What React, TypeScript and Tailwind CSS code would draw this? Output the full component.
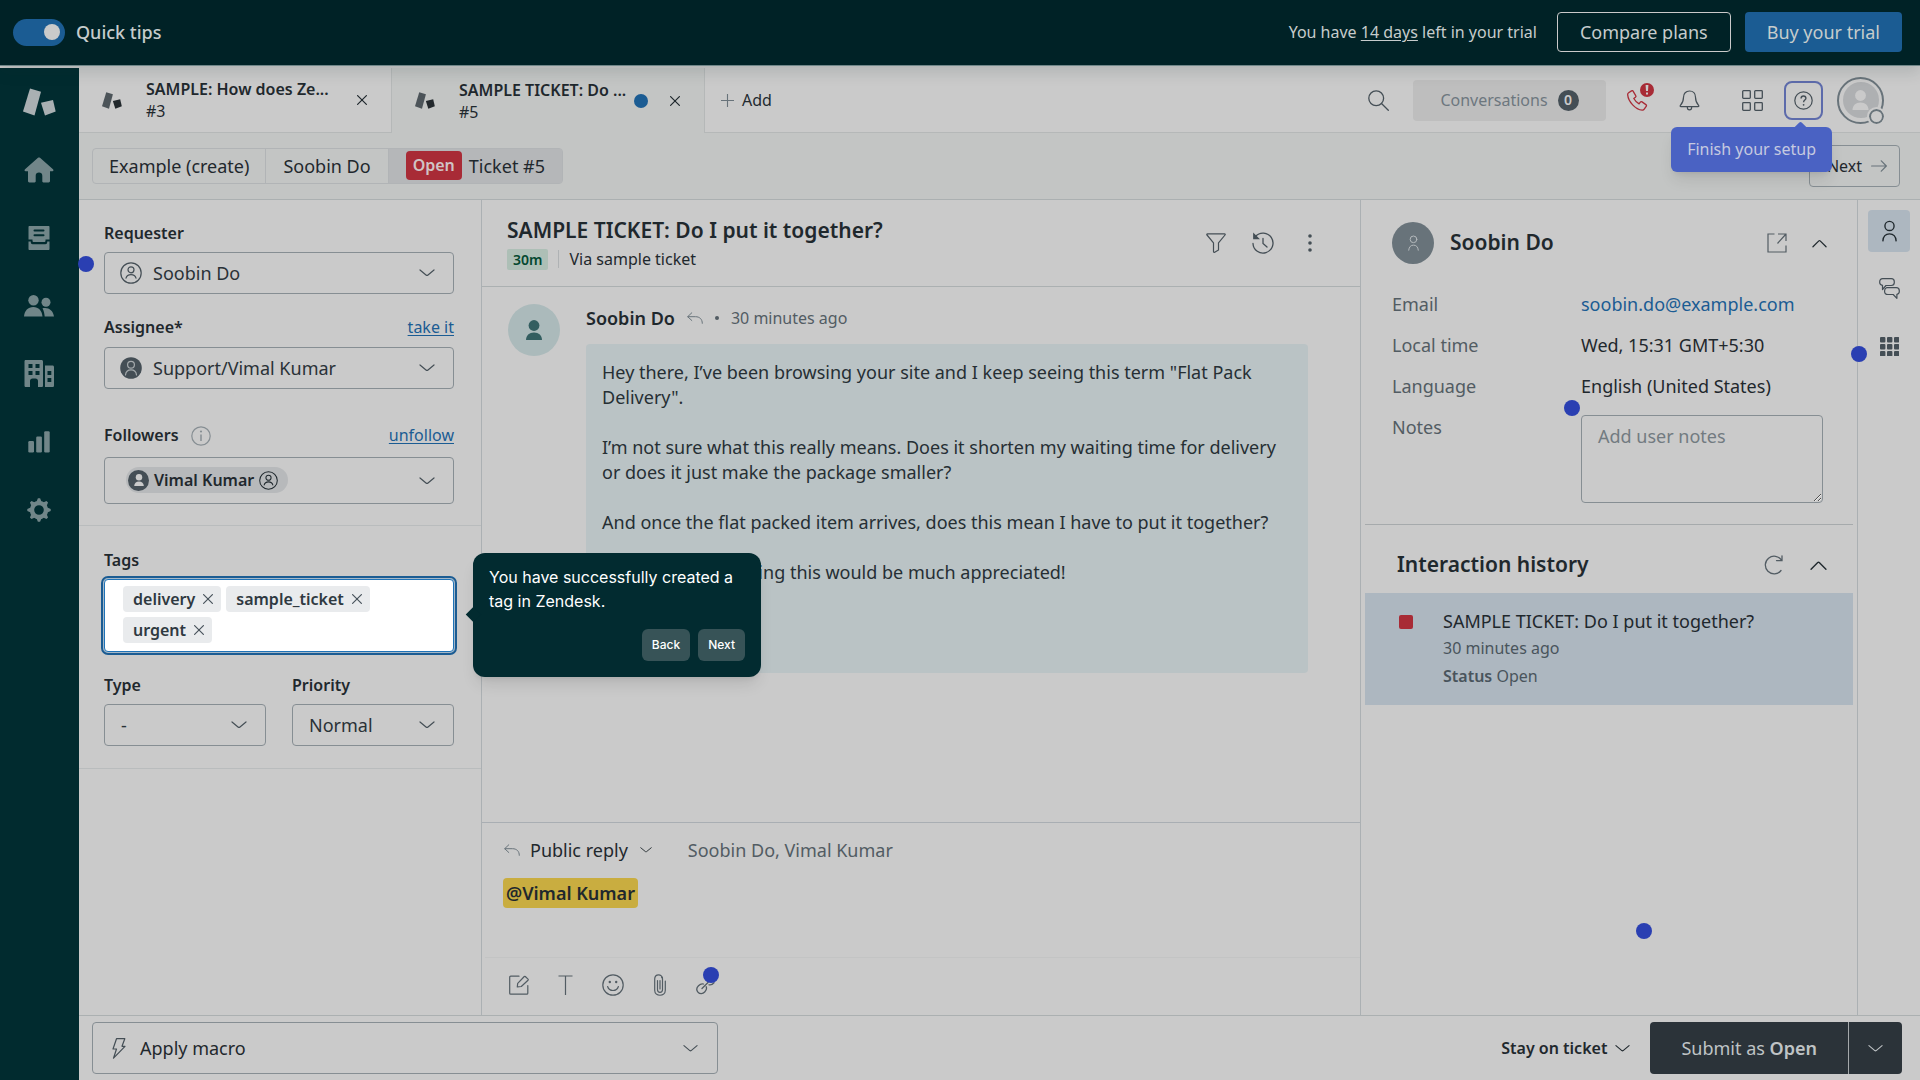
import type { ReactNode } from "react";

type IconProps = { className?: string };

const ChevronDown = ({ className = "w-4 h-4" }: IconProps) => (
  <svg viewBox="0 0 16 16" fill="none" stroke="currentColor" strokeWidth="1.2" strokeLinecap="round" className={className}>
    <path d="M1 5l6.3 5.2c.4.3 1 .3 1.4 0L15 5" />
  </svg>
);

const ChevronUp = ({ className = "w-4 h-4" }: IconProps) => (
  <svg viewBox="0 0 16 16" fill="none" stroke="currentColor" strokeWidth="1.3" strokeLinecap="round" className={className}>
    <path d="M1 11.500l6.300-6.300c.4-.4 1-.4 1.400 0L15 11.500" />
  </svg>
);

const Close = ({ className = "w-[10px] h-[10px]" }: IconProps) => (
  <svg viewBox="0 0 10 10" fill="none" stroke="currentColor" strokeWidth="1.2" strokeLinecap="round" className={className}>
    <path d="M.6.6l8.800 8.800M9.400.6L.6 9.400" />
  </svg>
);

const UserCircle = ({ className = "w-[22px] h-[22px]" }: IconProps) => (
  <svg viewBox="0 0 22 22" fill="none" stroke="currentColor" strokeWidth="1.2" strokeLinecap="round" className={className}>
    <circle cx="11" cy="11" r="10.200" />
    <circle cx="11" cy="7.800" r="3" />
    <path d="M6 16.200c.6-2.500 2.500-3.600 5-3.600s4.400 1.100 5 3.600" />
  </svg>
);

const UserCircleFill = ({ className = "w-[22px] h-[22px]" }: IconProps) => (
  <svg viewBox="0 0 22 22" fill="none" strokeLinecap="round" className={className}>
    <circle cx="11" cy="11" r="10.800" fill="#444e55" />
    <circle cx="11" cy="7.800" r="3.400" stroke="#a5aaad" strokeWidth="1.200" />
    <path d="M5.500 18c.3-3.500 2.500-5.200 5.500-5.200s5.200 1.700 5.500 5.200" stroke="#a5aaad" strokeWidth="1.200" />
  </svg>
);

const User = ({ className }: IconProps) => (
  <svg viewBox="0 0 16 24" fill="none" stroke="currentColor" strokeWidth="1.500" strokeLinecap="round" className={className}>
    <circle cx="8" cy="6.500" r="5" />
    <path d="M.8 22.800c.4-5 3.200-7.600 7.200-7.600s6.800 2.600 7.200 7.600" />
  </svg>
);

const UserSolid = ({ className }: IconProps) => (
  <svg viewBox="0 0 16 20" fill="currentColor" className={className}>
    <circle cx="8" cy="5.500" r="5.400" />
    <path d="M0 20c0-4.600 3.200-7.600 8-7.600s8 3 8 7.600z" />
  </svg>
);

const Reply = ({ className = "w-4 h-4" }: IconProps) => (
  <svg viewBox="0 0 16 12" fill="none" stroke="currentColor" strokeWidth="1" strokeLinecap="round" strokeLinejoin="round" className={className}>
    <path d="M4.800.8L.7 4.700l4.100 3.800M.9 4.700h7.600c4 0 6.800 2.300 6.800 6.600" />
  </svg>
);

const Mark = ({ className, small = "currentColor" }: IconProps & { small?: string }) => (
  <svg viewBox="0 0 33 28" className={className}>
    <path fill="currentColor" d="M7 .4L18 3.700 11.500 27.500 0 23.500z" />
    <path fill={small} d="M18 14.800l12-2.900L32.700 23.500 22 27.500z" />
  </svg>
);

const navItems: { name: string; icon: ReactNode }[] = [
  {
    name: "Home",
    icon: (
      <svg viewBox="0 0 30 26" fill="currentColor" className="w-[30px] h-[26px]">
        <path d="M14 .8c.6-.5 1.400-.5 2 0L29 12.200c.9.9.5 2-.6 2H26V24c0 .9-.5 1.400-1.400 1.400h-5.200c-.7 0-1.100-.4-1.100-1.100v-5.500c0-2-1.300-3.200-3.300-3.200s-3.300 1.200-3.300 3.200v5.500c0 .7-.4 1.100-1.100 1.100H5.400C4.500 25.400 4 24.900 4 24v-9.800H1.600c-1.100 0-1.500-1.100-.6-2z" />
      </svg>
    ),
  },
  {
    name: "Views",
    icon: (
      <svg viewBox="0 0 22 24" fill="currentColor" className="w-[22px] h-[24px]">
        <path fillRule="evenodd" d="M1.500 0h19c.6 0 1 .4 1 1v12.500h-4v1.200c0 .8-.5 1.300-1.300 1.300H5.800c-.8 0-1.300-.5-1.300-1.300v-1.200h-4V1c0-.6.400-1 1-1zM6.500 3.500a1 1 0 000 2h9a1 1 0 000-2zM6.500 8.200a1 1 0 000 2h9a1 1 0 000-2z" />
        <path d="M.5 15.500h2.300v.8c0 1.200.7 1.900 1.900 1.900h12.600c1.200 0 1.900-.7 1.900-1.900v-.8h2.300V23c0 .6-.4 1-1 1h-19c-.6 0-1-.4-1-1z" />
      </svg>
    ),
  },
  {
    name: "Customers",
    icon: (
      <svg viewBox="0 0 30 22" fill="currentColor" className="w-[30px] h-[22px]">
        <circle cx="9.500" cy="5.300" r="5.200" />
        <circle cx="22" cy="7.200" r="4.500" />
        <path d="M0 21.500C.5 15.800 4 12 9.300 12s8.700 3.800 9.200 9.500zM18.500 13.300c5.500-1.300 10.500 1.500 11.500 8.200h-9.300c-.3-3.200-1-6-2.200-8.200z" />
      </svg>
    ),
  },
  {
    name: "Organizations",
    icon: (
      <svg viewBox="0 0 30 28" fill="currentColor" className="w-[30px] h-[28px]">
        <path fillRule="evenodd" d="M1.500 0h16c.9 0 1.500.6 1.500 1.500v24c0 1-.5 1.500-1.300 1.500H14v-6c0-1.500-1-2.500-2.500-2.500h-3C7 18.500 6 19.500 6 21v6H2.300C.5 27 .5 26.500.5 25V1.500C.5.6.8 0 1.500 0zM4.500 4v4h4V4zm7 0v4h4V4zm-7 7v4h4v-4zm7 0v4h4v-4z" />
        <path fillRule="evenodd" d="M21 5.500h7.500c.9 0 1.500.6 1.500 1.500v18.500c0 1-.6 1.500-1.500 1.500H21zM23.500 11v4h3.800v-4zm0 7v4h3.800v-4z" />
      </svg>
    ),
  },
  {
    name: "Reporting",
    icon: (
      <svg viewBox="0 0 22 22" fill="currentColor" className="w-[22px] h-[22px]">
        <rect x=".3" y="10" width="5.700" height="11.500" rx="1.200" />
        <rect x="8.200" y="5.500" width="5.700" height="16" rx="1.200" />
        <rect x="16.200" y=".3" width="5.500" height="21.200" rx="1.200" />
      </svg>
    ),
  },
  {
    name: "Admin",
    icon: (
      <svg viewBox="0 0 24 24" className="w-6 h-6">
        <circle cx="12" cy="12" r="7" fill="none" stroke="currentColor" strokeWidth="4.400" />
        <g fill="currentColor">
          {[0, 45, 90, 135, 180, 225, 270, 315].map((a) => (
            <path key={a} d="M10.900.3h2.200l1.600 4H9.300z" transform={`rotate(${a} 12 12)`} />
          ))}
        </g>
      </svg>
    ),
  },
];

const details = [
  { label: "Email", value: "soobin.do@example.com", link: true },
  { label: "Local time", value: "Wed, 15:31 GMT+5:30" },
  { label: "Language", value: "English (United States)" },
];

const Dot = ({ className }: IconProps) => (
  <span className={`absolute z-10 w-4 h-4 rounded-full bg-[#2a3fb2] ${className}`} />
);

const TopBar = () => (
  <div className="relative z-20 flex items-center shrink-0 h-[66px] pl-[13px] pr-[18px] pb-px bg-[#002226] border-b border-[#6f8688] text-[#c6cccc] shadow-[0_6px_14px_rgba(20,40,40,0.14)]">
    <label className="flex items-center gap-[11px] text-lg font-medium">
      <input type="checkbox" defaultChecked className="peer sr-only" />
      <span className="flex items-center justify-end w-[52px] h-[27px] pr-[5px] rounded-full bg-[#1b5c93]">
        <span className="w-4 h-4 rounded-full bg-[#cacaca]" />
      </span>
      Quick tips
    </label>
    <p className="ml-auto mr-5 text-base">
      You have <a href="#trial" className="underline underline-offset-2">14 days</a> left in your trial
    </p>
    <button className="h-10 px-[22px] mr-[14px] text-lg border border-[#cacaca] rounded">Compare plans</button>
    <button className="h-10 px-[22px] text-lg rounded bg-[#1b5c93]">Buy your trial</button>
  </div>
);

const Sidebar = () => (
  <nav className="flex flex-col shrink-0 w-[79px] pr-px bg-[#012b2f] text-[#718689]">
    <div className="flex items-center justify-center h-[68px] text-[#a9b0b3]">
      <Mark className="w-[33px] h-7" />
    </div>
    {navItems.map((item) => (
      <a key={item.name} href="#nav" aria-label={item.name} className="flex items-center justify-center h-[68px]">
        {item.icon}
      </a>
    ))}
  </nav>
);

const Tab = ({ title, id, active }: { title: string; id: string; active?: boolean }) => (
  <div
    className={`flex items-center w-[313px] h-[65px] pl-[23px] pr-6 border-r border-[#b5b8b8] ${
      active ? "bg-[#c3c5c4]" : "border-b"
    }`}
  >
    <Mark className="w-5 h-[17px] mr-6 text-[#4c5459]" small="#22282c" />
    <div className="text-base leading-[22px]">
      <p className="font-semibold">{title}</p>
      <p>{id}</p>
    </div>
    {active && <span className="w-[14px] h-[14px] ml-auto mr-[22px] rounded-full bg-[#1b5c93]" />}
    <button aria-label="Close tab" className={active ? "" : "ml-auto"}>
      <Close />
    </button>
  </div>
);

const Header = () => (
  <header className="flex shrink-0 h-[65px]">
    <Tab title="SAMPLE: How does Ze..." id="#3" />
    <Tab title="SAMPLE TICKET: Do ..." id="#5" active />
    <div className="flex items-center flex-1 pl-4 pr-9 border-b border-[#b5b8b8] text-[#444e55]">
      <button className="flex items-center gap-2 text-base text-[#232b30]">
        <svg viewBox="0 0 13 13" stroke="#68737a" strokeWidth="1.100" className="w-[13px] h-[13px]">
          <path d="M6.500 0v13M0 6.500h13" />
        </svg>
        Add
      </button>
      <button aria-label="Search" className="ml-auto mr-6">
        <svg viewBox="0 0 21 21" fill="none" stroke="currentColor" strokeWidth="1.300" strokeLinecap="round" className="w-[21px] h-[21px]">
          <circle cx="8.200" cy="8.200" r="7.400" />
          <path d="M13.500 13.500l6.800 6.800" />
        </svg>
      </button>
      <button className="flex items-center justify-center gap-[10px] w-[193px] h-[41px] rounded bg-[#bebebe] text-base text-[#6d777e]">
        Conversations
        <span className="flex items-center justify-center w-[21px] h-[21px] rounded-full bg-[#444e55] text-sm font-semibold text-[#cacaca]">0</span>
      </button>
      <button aria-label="Talk" className="relative ml-[21px]">
        <svg viewBox="0 0 21 21" fill="none" stroke="#a82b36" strokeWidth="1.300" strokeLinejoin="round" className="w-[21px] h-[21px]">
          <path d="M4.500.9L1.600 2.800C.8 3.300.6 4 .7 4.900c.6 6.800 7.800 14.600 14.500 15.300.9.1 1.500-.2 2-1l2-2.900c.4-.6.3-1.300-.3-1.700l-3.900-2.700c-.6-.4-1.200-.3-1.700.3l-1.200 1.600C9.800 12.600 8 10.700 6.800 8.500l1.600-1.200c.6-.5.7-1.100.3-1.700L6.200 1.300C5.800.6 5.100.5 4.500.9z" />
        </svg>
        <span className="absolute -top-[7px] left-[13px] flex items-center justify-center w-[14px] h-[14px] rounded-full bg-[#a82b36]">
          <svg viewBox="0 0 4 10" fill="#cacaca" className="w-1 h-[10px]">
            <path d="M.6 0h2.800l-.4 6H1zM1 7.500h2v2H1z" />
          </svg>
        </span>
      </button>
      <button aria-label="Notifications" className="ml-[31px]">
        <svg viewBox="0 0 21 21" fill="none" stroke="currentColor" strokeWidth="1.200" strokeLinejoin="round" className="w-[21px] h-[21px]">
          <path d="M10.500 1c-3.600 0-6 2.500-6 6.200 0 4.300-1.300 6.200-3.100 8.200-.5.600-.3 1.300.6 1.300h17c.9 0 1.100-.7.6-1.300-1.800-2-3.100-3.900-3.100-8.200 0-3.700-2.400-6.200-6-6.200z" />
          <path d="M8.300 16.900c0 2 .8 2.900 2.200 2.900s2.200-.9 2.200-2.900" />
        </svg>
      </button>
      <button aria-label="Products" className="ml-[42px] mr-[21px]">
        <svg viewBox="0 0 21 21" fill="none" stroke="currentColor" strokeWidth="1.300" className="w-[21px] h-[21px]">
          <rect x=".7" y=".7" width="7.600" height="7.600" rx=".8" />
          <rect x="12.700" y=".7" width="7.600" height="7.600" rx=".8" />
          <rect x=".7" y="12.700" width="7.600" height="7.600" rx=".8" />
          <rect x="12.700" y="12.700" width="7.600" height="7.600" rx=".8" />
        </svg>
      </button>
      <div className="relative">
        <button aria-label="Help" className="flex items-center justify-center w-[39px] h-[39px] border-2 border-[#5d6bab] rounded-lg">
          <svg viewBox="0 0 19 19" fill="none" stroke="currentColor" strokeWidth="1.200" className="w-[19px] h-[19px]">
            <circle cx="9.500" cy="9.500" r="8.700" />
            <path d="M7.100 7.500c0-1.600 1-2.500 2.400-2.500s2.400.9 2.400 2.200c0 1.900-2.300 1.900-2.300 4" strokeWidth="1.400" />
            <circle cx="9.600" cy="13.800" r=".9" fill="currentColor" stroke="none" />
          </svg>
        </button>
        <span className="absolute z-10 top-[43px] left-[10px] w-[13px] h-[13px] rotate-45 rounded-xs bg-[#4a62c3]" />
        <div className="absolute z-10 top-[46px] -right-[9px] px-4 py-[11px] rounded-md bg-[#4a62c3] text-base leading-[23px] whitespace-nowrap text-[#c6cae0] shadow-lg">
          Finish your setup
        </div>
      </div>
      <button aria-label="Profile" className="relative flex items-center justify-center w-[47px] h-[47px] ml-[14px] rounded-full border-2 border-[#68737a]">
        <span className="flex items-center justify-center w-9 h-9 rounded-full bg-[#aeb0b2] text-[#cacaca]">
          <UserSolid className="w-[17px] h-5" />
        </span>
        <span className="absolute -right-[2px] -bottom-[2px] w-[15px] h-[15px] rounded-full border-2 border-[#68737a] bg-[#cacaca] outline-2 outline-[#cacaca]" />
      </button>
    </div>
  </header>
);

const Breadcrumb = () => (
  <div className="flex items-center justify-between shrink-0 h-[67px] pl-[13px] pr-5 pb-px bg-[#c3c5c4] border-b border-[#abb0b1]">
    <div className="flex h-9 border border-[#b1b4b6] rounded divide-x divide-[#b1b4b6] text-lg">
      <button className="px-4">Example (create)</button>
      <button className="px-[17px]">Soobin Do</button>
      <button className="flex items-center gap-[7px] px-[17px] bg-[#b5b7b9]">
        <span className="px-[7px] py-[3px] rounded bg-[#a82b36] text-base leading-[23px] font-semibold text-[#d0c4c5]">Open</span>
        Ticket #5
      </button>
    </div>
    <button className="flex items-center gap-[9px] h-[42px] pl-[17px] pr-3 border border-[#868e93] rounded text-base">
      Next
      <svg viewBox="0 0 16 12" fill="none" stroke="#68737a" strokeWidth="1.200" strokeLinecap="round" className="w-4 h-3">
        <path d="M.6 6h14.500M10.300.8l5 5.200-5 5.200" />
      </svg>
    </button>
  </div>
);

const SelectField = ({ id, value, icon, tall }: { id: string; value: string; icon?: ReactNode; tall?: boolean }) => (
  <div className="relative flex items-center text-[#444e55]">
    {icon && <span className="absolute left-4">{icon}</span>}
    <select
      id={id}
      className={`w-full pr-10 border border-[#868e93] rounded appearance-none text-lg text-[#2a3237] ${
        tall ? "h-[47px]" : "h-[42px]"
      } ${icon ? "pl-12" : "pl-4"}`}
    >
      <option>{value}</option>
    </select>
    <ChevronDown className="absolute right-[19px] w-4 h-4" />
  </div>
);

const Tag = ({ name }: { name: string }) => (
  <span className="flex items-center gap-2 h-[26px] pl-[10px] pr-2 rounded-sm bg-[#e9ebed] text-base font-semibold text-[#2f3941]">
    {name}
    <button aria-label={`Remove ${name}`} className="text-[#49545c]">
      <Close />
    </button>
  </span>
);

const TipPopup = () => (
  <div className="absolute z-10 -top-[26px] left-[369px] w-[288px] p-4 pt-3 rounded-xl bg-[#022b30] text-white font-[Inter,sans-serif] shadow-lg">
    <span className="absolute top-[56px] -left-[5px] w-[11px] h-[11px] rotate-45 bg-[#022b30]" />
    <p className="text-base leading-6">You have successfully created a tag in Zendesk.</p>
    <div className="flex justify-end gap-2 mt-4 text-xs font-medium">
      <button className="h-8 px-[10px] rounded-md bg-[#375357]">Back</button>
      <button className="h-8 px-[10px] rounded-md bg-[#375357]">Next</button>
    </div>
  </div>
);

const TicketFields = () => (
  <section className="relative shrink-0 w-[403px] border-r border-[#abb0b3] text-base">
    <Dot className="top-14 -left-px" />
    <div className="pl-[25px] pr-[27px] pt-[22px] pb-[21px] border-b border-[#b9bcbd]">
      <label htmlFor="requester" className="block mb-[7px] leading-[23px] font-semibold">Requester</label>
      <SelectField id="requester" value="Soobin Do" icon={<UserCircle />} />
      <div className="flex justify-between mt-[22px] mb-[8px] leading-[23px]">
        <label htmlFor="assignee" className="font-semibold">Assignee*</label>
        <a href="#take" className="text-[#1b5c93] underline underline-offset-2">take it</a>
      </div>
      <SelectField id="assignee" value="Support/Vimal Kumar" icon={<UserCircleFill />} />
      <div className="flex items-center mt-[35px] mb-[10px] leading-[23px]">
        <label htmlFor="followers" className="font-semibold">Followers</label>
        <svg viewBox="0 0 20 20" fill="none" stroke="#868e93" strokeWidth="1.200" className="w-5 h-5 ml-3">
          <circle cx="10" cy="10" r="9.200" />
          <path d="M10 8.500v6.500" strokeWidth="1.500" />
          <circle cx="10" cy="5.500" r="1.100" fill="#868e93" stroke="none" />
        </svg>
        <a href="#unfollow" className="ml-auto text-[#1b5c93] underline underline-offset-2">unfollow</a>
      </div>
      <div className="relative">
        <SelectField id="followers" value="" tall />
        <span className="absolute top-[10px] left-[22px] flex items-center gap-[5px] h-[26px] pl-[2px] pr-[10px] rounded-full bg-[#b7b9bb] font-semibold">
          <span className="flex items-center justify-center w-[21px] h-[21px] rounded-full bg-[#444e55] text-[#cacaca]">
            <UserSolid className="w-[10px] h-3" />
          </span>
          Vimal Kumar
          <UserCircle className="w-[19px] h-[19px]" />
        </span>
      </div>
    </div>
    <div className="pl-[25px] pr-[27px] pt-[23px] pb-[22px] border-b border-[#b9bcbd]">
      <label htmlFor="tags" className="block mb-[7px] leading-[23px] font-semibold">Tags</label>
      <div className="relative">
        <div className="flex flex-wrap content-start gap-[5px] min-h-[73px] px-[18px] py-[6px] bg-white border border-[#1f73b7] rounded ring-1 ring-[#a4b7c8] outline-2 outline-offset-1 outline-[#1b5c93]">
          <Tag name="delivery" />
          <Tag name="sample_ticket" />
          <Tag name="urgent" />
          <input id="tags" type="text" className="flex-1 min-w-10 outline-none" />
        </div>
        <TipPopup />
      </div>
      <div className="grid grid-cols-2 gap-[26px] mt-[22px]">
        <div>
          <label htmlFor="type" className="block mb-[7px] leading-[23px] font-semibold">Type</label>
          <SelectField id="type" value="-" />
        </div>
        <div>
          <label htmlFor="priority" className="block mb-[7px] leading-[23px] font-semibold">Priority</label>
          <SelectField id="priority" value="Normal" />
        </div>
      </div>
    </div>
  </section>
);

const Conversation = () => (
  <main className="flex flex-col flex-1 min-w-0">
    <div className="flex items-center h-[87px] pl-[25px] pr-10 border-b border-[#abb0b1]">
      <div>
        <h1 className="text-[21px] leading-7 font-semibold">SAMPLE TICKET: Do I put it together?</h1>
        <div className="flex items-center mt-1 text-base leading-[22px]">
          <span className="px-[6px] rounded-xs bg-[#adbfb6] text-sm leading-[21px] font-semibold text-[#03482f]">30m</span>
          <span className="w-px h-[18px] mx-[10px] bg-[#afb2b4]" />
          Via sample ticket
        </div>
      </div>
      <div className="flex items-center gap-[26px] ml-auto text-[#444e55]">
        <button aria-label="Filter">
          <svg viewBox="0 0 20 20" fill="none" stroke="currentColor" strokeWidth="1.200" strokeLinejoin="round" className="w-5 h-5">
            <path d="M1.500.8h17c.7 0 .9.700.5 1.200L12.500 9.800v7.200l-3.800 2.200c-.6.300-1.200 0-1.200-.7V9.800L1 2C.6 1.500.8.8 1.500.8z" />
          </svg>
        </button>
        <button aria-label="Events">
          <svg viewBox="0 0 22 22" fill="none" stroke="currentColor" strokeWidth="1.300" strokeLinecap="round" className="w-[22px] h-[22px]">
            <path d="M3.500 4.500A10 10 0 111 11.500M11 6.500v5l4 3.500" />
            <path d="M1.800 2v4.600h4.600z" fill="currentColor" />
          </svg>
        </button>
        <button aria-label="More" className="px-2">
          <svg viewBox="0 0 4 18" fill="currentColor" className="w-1 h-[18px]">
            <circle cx="2" cy="2" r="1.800" />
            <circle cx="2" cy="9" r="1.800" />
            <circle cx="2" cy="16" r="1.800" />
          </svg>
        </button>
      </div>
    </div>

    <div className="flex items-start flex-1 pt-[17px] pl-[26px] pr-[52px]">
      <div className="flex items-center justify-center shrink-0 w-[52px] h-[52px] mr-[26px] rounded-full bg-[#abbabb] text-[#335e60]">
        <UserSolid className="w-4 h-5" />
      </div>
      <div className="flex-1">
        <div className="flex items-center gap-3 h-7 mb-3 text-base text-[#525c63]">
          <h2 className="text-lg font-semibold text-[#1f282d]">Soobin Do</h2>
          <Reply className="w-4 h-3 text-[#68737a]" />
          <span className="w-1 h-1 rounded-full bg-[#525c63]" />
          30 minutes ago
        </div>
        <div className="flex flex-col gap-[25px] px-4 pt-4 pb-[13px] rounded-sm bg-[#bac3c5] text-lg leading-[25px] text-[#262f34]">
          <p>Hey there, I’ve been browsing your site and I keep seeing this term "Flat Pack Delivery".</p>
          <p>I’m not sure what this really means. Does it shorten my waiting time for delivery or does it just make the package smaller?</p>
          <p>And once the flat packed item arrives, does this mean I have to put it together?</p>
          <p>Your help in clarifying this would be much appreciated!</p>
          <p>
            Thanks,
            <br />
            Soobin
          </p>
        </div>
      </div>
    </div>

    <div className="h-[193px] border-t border-[#a9aeb3]">
      <div className="flex items-center h-[54px] pl-[22px] text-lg">
        <button className="flex items-center gap-[10px]">
          <Reply className="w-4 h-3 text-[#68737a]" />
          Public reply
          <ChevronDown className="w-3 h-3 ml-[2px]" />
        </button>
        <span className="ml-9 text-[#525c63]">Soobin Do, Vimal Kumar</span>
      </div>
      <div className="h-[81px] ml-[3px] pl-[18px] pt-[1px] border-b border-[#c3c4c4] text-lg">
        <span className="inline-block px-[3px] rounded bg-[#c9ad40] leading-[30px] font-semibold">@Vimal Kumar</span>
      </div>
      <div className="flex items-center h-[54px] pl-[27px] text-[#525c63]">
        <button aria-label="Draft" className="w-[47px]">
          <svg viewBox="0 0 20 20" fill="none" stroke="currentColor" strokeWidth="1.200" strokeLinecap="round" strokeLinejoin="round" className="w-5 h-5">
            <path d="M10 1.200H1.700c-.6 0-1 .4-1 1v16c0 .6.400 1 1 1h16.100c.6 0 1-.4 1-1v-7.700" />
            <path d="M8.700 8.300L15.300 1.500c.3-.3.700-.3 1 0l2.700 2.700c.3.300.3.700 0 1L12.300 11.500l-4 .4z" />
          </svg>
        </button>
        <button aria-label="Text style" className="w-[46px] pl-[2px]">
          <svg viewBox="0 0 15 20" fill="none" stroke="currentColor" strokeWidth="1.200" className="w-[15px] h-5">
            <path d="M.5 1h14M7.500 1v19" />
          </svg>
        </button>
        <button aria-label="Emoji" className="w-[47px]">
          <svg viewBox="0 0 22 22" fill="none" stroke="currentColor" strokeWidth="1.200" strokeLinecap="round" className="w-[22px] h-[22px]">
            <circle cx="11" cy="11" r="10.200" />
            <path d="M5.600 12.500c.8 2.500 2.800 4 5.400 4s4.600-1.500 5.400-4" />
            <circle cx="7.800" cy="8" r="1.200" fill="currentColor" stroke="none" />
            <circle cx="14.200" cy="8" r="1.200" fill="currentColor" stroke="none" />
          </svg>
        </button>
        <button aria-label="Attach" className="w-[46px] pl-[5px]">
          <svg viewBox="0 0 12 22" fill="none" stroke="currentColor" strokeWidth="1.200" strokeLinecap="round" className="w-3 h-[22px]">
            <path d="M3.500 6.500v9.300c0 3.300 5 3.300 5 0V4.800c0-1.200-.2-1.600-.9-1.600M6 6.500V15" />
            <path d="M11.300 7v9.300c0 6.600-10.600 6.600-10.600 0V5c0-5.600 7.800-5.600 7.800 0" />
          </svg>
        </button>
        <button aria-label="Link" className="relative pl-[1px]">
          <svg viewBox="0 0 20 20" fill="none" stroke="currentColor" strokeWidth="1.300" strokeLinecap="round" className="w-5 h-5">
            <path d="M7.500 9c-2.200-.7-3.300 0-5 1.700-2 2-2.200 4.500-.5 6.500 2 2 4.700 1.800 6.700-.2 1.700-1.700 2.400-3.200 1.500-5.200M6 13.500l6-6" />
            <path d="M13 9.800c2.500.7 3.700-.5 5-2" />
          </svg>
          <Dot className="-top-2 left-2" />
        </button>
      </div>
    </div>
  </main>
);

const CustomerPanel = () => (
  <aside className="relative shrink-0 w-[498px] px-1 border-x border-[#abb0b3]">
    <Dot className="top-[200px] left-[203px]" />
    <Dot className="top-[146px] -right-[10px]" />
    <Dot className="top-[723px] left-[275px]" />
    <div className="pl-[27px] pr-[31px] pt-[22px] pb-[21px] border-b border-[#a6aaac]">
      <div className="flex items-center">
        <span className="flex items-center justify-center w-[42px] h-[42px] mr-4 rounded-full bg-[#68737a] text-[#b4b9bc]">
          <User className="w-[13px] h-4" />
        </span>
        <h2 className="text-[21px] font-semibold">Soobin Do</h2>
        <button aria-label="Open profile" className="ml-auto mr-[25px] text-[#525c63]">
          <svg viewBox="0 0 20 20" fill="none" stroke="currentColor" strokeWidth="1.200" className="w-5 h-5">
            <path d="M7.500 1H1v18h18v-6.500M11 1h8v7M19 1L10.500 10.500" />
          </svg>
        </button>
        <button aria-label="Collapse profile" className="-mr-[5px]">
          <ChevronUp className="w-[15px] h-[15px]" />
        </button>
      </div>
      <dl className="grid grid-cols-[189px_1fr] gap-y-4 mt-[28px] text-lg leading-[25px]">
        {details.map((d) => (
          <div key={d.label} className="contents">
            <dt className="text-[#525c63]">{d.label}</dt>
            <dd className={d.link ? "text-[#1b5c93]" : "text-[#1f282d]"}>
              {d.link ? <a href="#email">{d.value}</a> : d.value}
            </dd>
          </div>
        ))}
        <dt className="text-[#525c63]">
          <label htmlFor="notes">Notes</label>
        </dt>
        <dd>
          <textarea
            id="notes"
            placeholder="Add user notes"
            className="block w-[242px] h-[88px] px-4 py-2 border border-[#868e93] rounded placeholder:text-[#727b81]"
          />
        </dd>
      </dl>
    </div>
    <div className="flex items-center h-[68px] pt-[12px] pl-8 pr-[26px]">
      <h2 className="text-[21px] font-semibold">Interaction history</h2>
      <button aria-label="Refresh" className="ml-auto mr-[26px] text-[#525c63]">
        <svg viewBox="0 0 20 20" fill="none" stroke="currentColor" strokeWidth="1.300" strokeLinecap="round" className="w-5 h-5">
          <path d="M17 15.500A8.800 8.800 0 1117.500 5.200M18 .8v4.800h-5.500" />
        </svg>
      </button>
      <button aria-label="Collapse history">
        <ChevronUp className="w-[17px] h-[17px]" />
      </button>
    </div>
    <div className="flex h-[112px] pt-4 pl-[34px] bg-[#adb7c0]">
      <span className="w-[14px] h-[14px] mt-[6px] mr-[30px] rounded-xs bg-[#a82b36]" />
      <div className="text-base leading-7 text-[#49545c]">
        <a href="#ticket" className="block text-lg leading-[25px] text-[#1f282d]">SAMPLE TICKET: Do I put it together?</a>
        <p>30 minutes ago</p>
        <p><span className="font-semibold">Status</span> Open</p>
      </div>
    </div>
  </aside>
);

const Rail = () => (
  <div className="flex flex-col items-center shrink-0 w-[62px] pt-[10px] gap-[26px] text-[#444e55]">
    <button aria-label="Customer" className="flex items-center justify-center w-[42px] h-[42px] rounded bg-[#adb7c0] text-[#1f282d]">
      <User className="w-[15px] h-[22px]" />
    </button>
    <button aria-label="Side conversations">
      <svg viewBox="0 0 21 21" fill="none" stroke="currentColor" strokeWidth="1.200" strokeLinejoin="round" className="w-[21px] h-[21px]">
        <path d="M7 7.500L3.500 11.500V7.300C1.500 7 .7 6 .7 4.500v-.8C.7 1.700 1.800.7 3.700.7h8.600c2 0 3 1 3 3v.8c0 2-1 3-3 3z" />
        <path d="M7.500 9.700h9.800c1.900 0 3 1 3 3v.8c0 1.500-.8 2.500-2.400 2.800V20.300L14.200 16.500H8.800c-2 0-3.200-1-3.200-3v-.8c0-1.500.5-2.500 1.900-3z" />
      </svg>
    </button>
    <button aria-label="Apps" className="mt-3">
      <svg viewBox="0 0 19 19" fill="currentColor" className="w-[19px] h-[19px]">
        {[0, 7, 14].map((y) => [0, 7, 14].map((x) => <rect key={`${x}-${y}`} x={x} y={y} width="5.400" height="5.400" rx="1" />))}
      </svg>
    </button>
  </div>
);

const Footer = () => (
  <footer className="flex items-center shrink-0 h-[65px] pl-[13px] pr-[18px] border-t border-[#abb0b1]">
    <button className="flex items-center w-[626px] h-[52px] pl-[19px] pr-[19px] border border-[#868e93] rounded text-lg">
      <svg viewBox="0 0 14 21" fill="none" stroke="#444e55" strokeWidth="1.200" strokeLinejoin="round" className="w-[14px] h-[21px] mr-[14px]">
        <path d="M4.500.7h8.300L10 8.300h3L1.500 20.200 4.500 11H1z" />
      </svg>
      Apply macro
      <ChevronDown className="w-[15px] h-[15px] ml-auto text-[#444e55]" />
    </button>
    <button className="flex items-center gap-2 ml-auto mr-5 text-base font-semibold">
      Stay on ticket
      <ChevronDown className="w-[15px] h-[15px]" />
    </button>
    <div className="flex h-[52px] rounded overflow-hidden text-lg text-[#bfc3c5]">
      <button className="px-[31px] bg-[#2b3339]">
        Submit as <span className="font-semibold">Open</span>
      </button>
      <button aria-label="Submit options" className="flex items-center justify-center w-[54px] bg-[#2b3339] border-l border-[#a5a9ab]">
        <ChevronDown className="w-[15px] h-[15px]" />
      </button>
    </div>
  </footer>
);

const App = () => {
  return (
    <div className="flex flex-col min-h-screen bg-[#cacaca] text-[#1f282d] font-['Noto_Sans',sans-serif]">
      <TopBar />
      <div className="flex flex-1 pt-[2px]">
        <Sidebar />
        <div className="flex flex-col flex-1 min-w-0">
          <Header />
          <Breadcrumb />
          <div className="flex flex-1">
            <TicketFields />
            <Conversation />
            <CustomerPanel />
            <Rail />
          </div>
          <Footer />
        </div>
      </div>
    </div>
  );
};

export default App;
